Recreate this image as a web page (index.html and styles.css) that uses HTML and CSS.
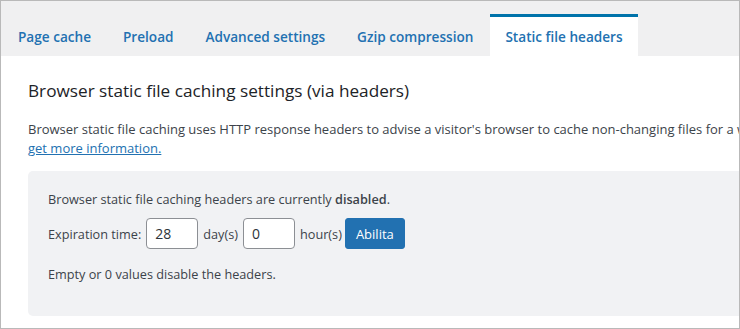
FILE: index.html
```html
<!DOCTYPE html>
<html lang="en">
<head>
  <meta charset="UTF-8">
  <title>Static file headers</title>
  <link rel="stylesheet" href="styles.css">
</head>
<body>
  <div class="frame">
    <!-- Tabs -->
    <nav class="tabs">
      <a href="#" class="tab">Page cache</a>
      <a href="#" class="tab">Preload</a>
      <a href="#" class="tab">Advanced settings</a>
      <a href="#" class="tab">Gzip compression</a>
      <a href="#" class="tab active">Static file headers</a>
    </nav>

    <!-- Settings -->
    <main class="content">
      <h2>Browser static file caching settings (via headers)</h2>
      <p class="intro">Browser static file caching uses HTTP response headers to advise a visitor's browser to cache non-changing files for a while, so that<br><a href="#">get more information.</a></p>

      <div class="panel">
        <p>Browser static file caching headers are currently <strong>disabled</strong>.</p>
        <form class="expire-row">
          <label>Expiration time:</label>
          <input type="text" value="28" class="num">
          <span>day(s)</span>
          <input type="text" value="0" class="num">
          <span>hour(s)</span>
          <button type="button" class="btn-primary">Abilita</button>
        </form>
        <p>Empty or 0 values disable the headers.</p>
      </div>
    </main>
  </div>
</body>
</html>
```

FILE: styles.css
```css
* {
  margin: 0;
  padding: 0;
  box-sizing: border-box;
}

body {
  width: 740px;
  height: 329px;
  overflow: hidden;
  font-family: 'Open Sans', 'Noto Sans', sans-serif;
  color: #3c434a;
  background: #fff;
}

.frame {
  height: 329px;
  border: 1px solid #b9b9b9;
  overflow: hidden;
  background: #fff;
}

/* Tabs */
.tabs {
  display: flex;
  align-items: flex-end;
  gap: 2px;
  height: 55px;
  padding-left: 2px;
  background: #f0f0f1;
}

.tab {
  height: 42px;
  padding: 0 15px;
  display: flex;
  align-items: center;
  border-top: 3px solid transparent;
  color: #2271b1;
  text-decoration: none;
  font-size: 13.6px;
  font-weight: 600;
}

.tab.active {
  background: #fff;
  border-top-color: #0073aa;
}

/* Content */
.content {
  width: 1100px;
  padding: 22px 0 0 27px;
}

.content h2 {
  font-size: 17.2px;
  font-weight: 500;
  color: #1d2327;
  line-height: 26px;
  margin-bottom: 16px;
}

.intro {
  font-size: 13px;
  line-height: 19px;
  white-space: nowrap;
}

.intro a {
  color: #2271b1;
}

.panel {
  margin-top: 13px;
  background: #f1f2f4;
  border-radius: 5px;
  padding: 19px 20px 33px;
  font-size: 12.7px;
  line-height: 18px;
}

.panel strong {
  font-weight: 600;
}

.expire-row {
  display: flex;
  align-items: center;
  gap: 5px;
  margin: 10px 0 16px;
}

.num {
  width: 52px;
  height: 31px;
  border: 1px solid #8c8f94;
  border-radius: 4px;
  padding: 0 8px;
  font: inherit;
  font-size: 14px;
  color: #2c3338;
  background: #fff;
}

.btn-primary {
  height: 31px;
  margin-left: -2px;
  padding: 0 10px;
  background: #2271b1;
  border: 1px solid #2271b1;
  border-radius: 3px;
  color: #fff;
  font: inherit;
  font-size: 13px;
}
```
